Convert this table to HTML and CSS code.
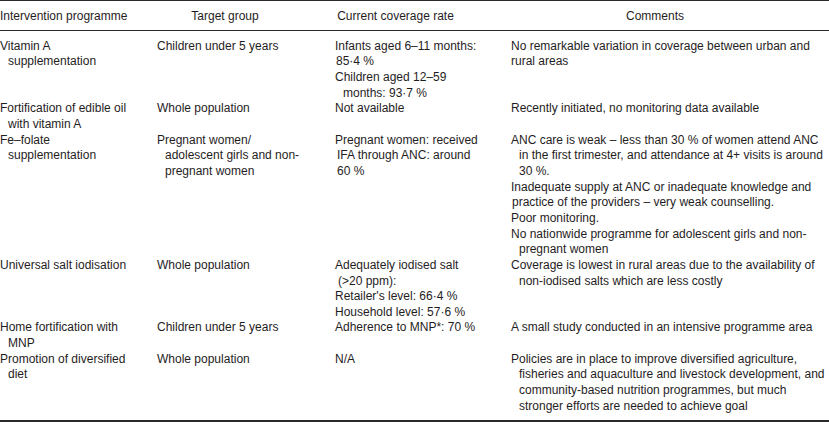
FILE: index.html
```html
<!DOCTYPE html>
<html lang="en">
<head>
<meta charset="utf-8">
<title>Intervention programmes</title>
<link rel="stylesheet" href="styles.css">
</head>
<body>
<table class="tbl">
  <colgroup>
    <col class="c1"><col class="c2"><col class="c3"><col class="c4">
  </colgroup>
  <thead>
    <tr>
      <th class="h1">Intervention programme</th>
      <th class="h2">Target group</th>
      <th class="h3">Current coverage rate</th>
      <th class="h4">Comments</th>
    </tr>
  </thead>
  <tbody>
    <tr>
      <td><p class="hang">Vitamin A<br>supplementation</p></td>
      <td><p class="hang">Children under 5 years</p></td>
      <td><p class="hang1">Infants aged 6–11 months:<br>85·4 %</p><p class="hang">Children aged 12–59<br>months: 93·7 %</p></td>
      <td><p class="flush">No remarkable variation in coverage between urban and<br>rural areas</p></td>
    </tr>
    <tr>
      <td><p class="hang">Fortification of edible oil<br>with vitamin A</p></td>
      <td><p class="hang">Whole population</p></td>
      <td><p class="hang">Not available</p></td>
      <td><p class="hang">Recently initiated, no monitoring data available</p></td>
    </tr>
    <tr>
      <td><p class="hang">Fe–folate<br>supplementation</p></td>
      <td><p class="hang">Pregnant women/<br>adolescent girls and non-<br>pregnant women</p></td>
      <td><p class="hang2">Pregnant women: received<br>IFA through ANC: around<br>60 %</p></td>
      <td>
        <p class="hang">ANC care is weak – less than 30 % of women attend ANC<br>in the first trimester, and attendance at 4+ visits is around<br>30 %.</p>
        <p class="hang1">Inadequate supply at ANC or inadequate knowledge and<br>practice of the providers – very weak counselling.</p>
        <p class="hang">Poor monitoring.</p>
        <p class="hang">No nationwide programme for adolescent girls and non-<br>pregnant women</p>
      </td>
    </tr>
    <tr>
      <td><p class="hang">Universal salt iodisation</p></td>
      <td><p class="hang">Whole population</p></td>
      <td><p class="hang3">Adequately iodised salt<br>(&gt;20 ppm):</p><p class="hang">Retailer's level: 66·4 %</p><p class="hang">Household level: 57·6 %</p></td>
      <td><p class="hang">Coverage is lowest in rural areas due to the availability of<br>non-iodised salts which are less costly</p></td>
    </tr>
    <tr>
      <td><p class="hang">Home fortification with<br>MNP</p></td>
      <td><p class="hang">Children under 5 years</p></td>
      <td><p class="hang">Adherence to MNP*: 70 %</p></td>
      <td><p class="hang">A small study conducted in an intensive programme area</p></td>
    </tr>
    <tr>
      <td><p class="hang">Promotion of diversified<br>diet</p></td>
      <td><p class="hang">Whole population</p></td>
      <td><p class="hang">N/A</p></td>
      <td><p class="hang">Policies are in place to improve diversified agriculture,<br>fisheries and aquaculture and livestock development, and<br>community-based nutrition programmes, but much<br>stronger efforts are needed to achieve goal</p></td>
    </tr>
  </tbody>
</table>
</body>
</html>
```

FILE: styles.css
```css
html, body {
  margin: 0;
  padding: 0;
  background: #ffffff;
  overflow: hidden;
}

body {
  font-family: "Liberation Sans", Arial, sans-serif;
  font-size: 12px;
  line-height: 15.66px;
  color: #1f1d1e;
}

.tbl {
  width: 829px;
  table-layout: fixed;
  border-collapse: separate;
  border-spacing: 0;
}

.c1 { width: 157px; }
.c2 { width: 178px; }
.c3 { width: 176px; }
.c4 { width: 318px; }

.tbl th {
  font-weight: normal;
  white-space: nowrap;
  padding: 8px 0 5px 0;
  border-top: 1px solid #2a2a2a;
  border-bottom: 1px solid #2a2a2a;
  vertical-align: top;
}

.h1 { text-align: left; }
.h2 { text-align: center; padding-right: 42px !important; }
.h3 { text-align: center; padding-right: 55px !important; }
.h4 { text-align: center; padding-right: 30px !important; }

.tbl td {
  padding: 0;
  vertical-align: top;
  white-space: nowrap;
}

.tbl tbody tr:first-child td { padding-top: 8px; }
.tbl tbody tr:last-child td {
  padding-bottom: 5.5px;
  border-bottom: 2px solid #2a2a2a;
}

.tbl p { margin: 0; }

.hang  { padding-left: 8px; text-indent: -8px; }
.hang1 { padding-left: 1px; text-indent: -1px; }
.hang2 { padding-left: 2px; text-indent: -2px; }
.hang3 { padding-left: 3px; text-indent: -3px; }
.flush { padding-left: 0; text-indent: 0; }
```
